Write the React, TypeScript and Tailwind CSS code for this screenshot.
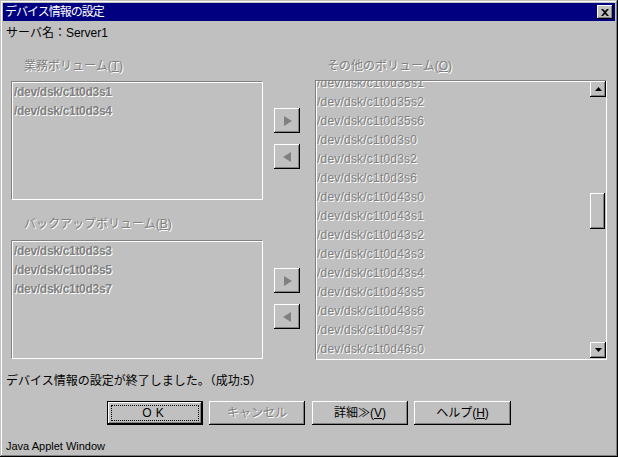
import React from "react";

const raised =
  "shadow-[inset_-1px_-1px_0_#000,inset_1px_1px_0_#fff,inset_-2px_-2px_0_#808080]";
const disabled = "text-[#808080] [text-shadow:1px_1px_0_#ffffff]";

const leftTop = ["/dev/dsk/c1t0d3s1", "/dev/dsk/c1t0d3s4"];
const leftBottom = ["/dev/dsk/c1t0d3s3", "/dev/dsk/c1t0d3s5", "/dev/dsk/c1t0d3s7"];
const others = [
  "/dev/dsk/c1t0d35s1",
  "/dev/dsk/c1t0d35s2",
  "/dev/dsk/c1t0d35s6",
  "/dev/dsk/c1t0d3s0",
  "/dev/dsk/c1t0d3s2",
  "/dev/dsk/c1t0d3s6",
  "/dev/dsk/c1t0d43s0",
  "/dev/dsk/c1t0d43s1",
  "/dev/dsk/c1t0d43s2",
  "/dev/dsk/c1t0d43s3",
  "/dev/dsk/c1t0d43s4",
  "/dev/dsk/c1t0d43s5",
  "/dev/dsk/c1t0d43s6",
  "/dev/dsk/c1t0d43s7",
  "/dev/dsk/c1t0d46s0",
];

function ArrowButton({ dir, className = "" }: { dir: "right" | "left"; className?: string }) {
  return (
    <div className={`w-[26px] h-[25px] bg-[#c0c0c0] ${raised} flex items-center justify-center ${className}`}>
      <svg width="9" height="10" viewBox="0 0 9 10">
        {dir === "right" ? (
          <polygon points="1,0 9,5 1,10" fill="#808080" />
        ) : (
          <polygon points="8,0 0,5 8,10" fill="#808080" />
        )}
      </svg>
    </div>
  );
}

function ListBox({ items, className = "" }: { items: string[]; className?: string }) {
  return (
    <div
      className={`border border-[#808080] border-r-white border-b-white shadow-[inset_1px_1px_0_#fff] pt-[1px] pl-[2px] overflow-hidden ${className}`}
    >
      {items.map((it) => (
        <div key={it} className={`h-[19px] leading-[19px] text-[12px] font-bold tracking-[-0.3px] ${disabled}`}>
          {it}
        </div>
      ))}
    </div>
  );
}

function Label({ text, mn, className = "" }: { text: string; mn: string; className?: string }) {
  return (
    <div className={`h-[16px] leading-[16px] text-[12px] ${disabled} ${className}`}>
      {text}(<span className="underline">{mn}</span>)
    </div>
  );
}

function Btn({
  children,
  className = "",
  isDefault = false,
}: {
  children: React.ReactNode;
  className?: string;
  isDefault?: boolean;
}) {
  if (isDefault) {
    return (
      <div className={`h-[24px] border border-black ${className}`}>
        <div className={`h-full w-full ${raised} p-[3px]`}>
          <div className="h-full w-full border border-dotted border-black flex items-center justify-center text-[12px] text-black">
            {children}
          </div>
        </div>
      </div>
    );
  }
  return (
    <div className={`h-[24px] ${raised} flex items-center justify-center text-[12px] ${className}`}>
      {children}
    </div>
  );
}

export default function App() {
  return (
    <div className="w-[618px] h-[457px] bg-[#c0c0c0] p-[3px] flex flex-col overflow-hidden font-['Liberation_Sans','Noto_Sans_CJK_JP',sans-serif] text-black shadow-[inset_-1px_-1px_0_#000,inset_1px_1px_0_#c0c0c0,inset_-2px_-2px_0_#808080,inset_2px_2px_0_#fff]">
      {/* title bar */}
      <div className="h-[18px] bg-[#000080] flex items-start justify-between shrink-0">
        <div className="text-white text-[12px] leading-[18px] pl-[2px] tracking-[-1px]">デバイス情報の設定</div>
        <div className={`mt-[2px] mr-[2px] w-[16px] h-[14px] bg-[#c0c0c0] ${raised} flex items-center justify-center`}>
          <svg width="8" height="7" viewBox="0 0 8 7">
            <path d="M0 0h2l2 2 2-2h2L5 3.5 8 7H6L4 5 2 7H0l3-3.5z" fill="#000" />
          </svg>
        </div>
      </div>

      <div className="mt-[4px] pl-[3px] h-[16px] leading-[16px] text-[12px] shrink-0">サーバ名：Server1</div>

      {/* main area */}
      <div className="mt-[17px] ml-[8px] flex shrink-0">
        <div className="w-[252px] flex flex-col">
          <Label text="業務ボリューム" mn="T" className="pl-[13px]" />
          <ListBox items={leftTop} className="mt-[7px] h-[119px]" />
          <Label text="バックアップボリューム" mn="B" className="pl-[13px] mt-[16px]" />
          <ListBox items={leftBottom} className="mt-[8px] h-[119px]" />
        </div>

        <div className="ml-[11px] w-[26px] flex flex-col">
          <ArrowButton dir="right" className="mt-[50px]" />
          <ArrowButton dir="left" className="mt-[11px]" />
          <ArrowButton dir="right" className="mt-[99px]" />
          <ArrowButton dir="left" className="mt-[11px]" />
        </div>

        <div className="ml-[15px] w-[292px] flex flex-col">
          <Label text="その他のボリューム" mn="O" className="pl-[12px]" />
          <div className="mt-[6px] h-[280px] border border-[#808080] border-r-white border-b-white shadow-[inset_1px_1px_0_#fff] flex">
            <div className="flex-1 overflow-hidden pl-[1px]">
              <div className="-mt-[7px]">
                {others.map((it) => (
                  <div key={it} className={`h-[19px] leading-[19px] text-[12px] tracking-[0.2px] ${disabled}`}>
                    {it}
                  </div>
                ))}
              </div>
            </div>
            <div className="w-[16px] flex flex-col">
              <div className={`h-[16px] bg-[#c0c0c0] ${raised} flex items-center justify-center`}>
                <svg width="7" height="4" viewBox="0 0 7 4">
                  <polygon points="3.5,0 7,4 0,4" fill="#000" />
                </svg>
              </div>
              <div className={`mt-[96px] h-[36px] w-[15px] ${raised}`} />
              <div className="flex-1" />
              <div className={`h-[16px] mb-[1px] bg-[#c0c0c0] ${raised} flex items-center justify-center`}>
                <svg width="7" height="4" viewBox="0 0 7 4">
                  <polygon points="0,0 7,0 3.5,4" fill="#000" />
                </svg>
              </div>
            </div>
          </div>
        </div>
      </div>

      <div className="mt-[13px] pl-[3px] h-[16px] leading-[16px] text-[12px] shrink-0">
        デバイス情報の設定が終了しました。（成功:5）
      </div>

      <div className="mt-[12px] flex shrink-0">
        <Btn isDefault className="ml-[104px] w-[96px]">
          <span className="tracking-[4px]">OK</span>
        </Btn>
        <Btn className={`ml-[6px] w-[96px] ${disabled}`}>キャンセル</Btn>
        <Btn className="ml-[7px] w-[96px]">
          詳細≫(<span className="underline">V</span>)
        </Btn>
        <Btn className="ml-[6px] w-[97px]">
          ヘルプ(<span className="underline">H</span>)
        </Btn>
      </div>

      <div className="mt-[14px] pl-[3px] h-[15px] leading-[15px] text-[11px] shrink-0">Java Applet Window</div>
    </div>
  );
}
